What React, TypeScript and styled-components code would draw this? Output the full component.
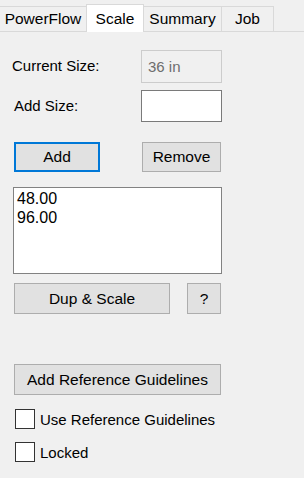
import React from 'react';
import styled, { createGlobalStyle } from 'styled-components';

const GlobalStyle = createGlobalStyle`
  html, body {
    margin: 0;
    padding: 0;
    background: #f0f0f0;
  }
  body {
    font-family: "Liberation Sans", Arial, sans-serif;
    font-size: 15px;
    color: #000;
  }
`;

const Window = styled.div`
  width: 304px;
  height: 478px;
  background: #f0f0f0;
  overflow: hidden;
`;

const TabStrip = styled.div`
  display: flex;
  align-items: flex-end;
  height: 32px;
  box-sizing: border-box;
  border-bottom: 1px solid #d9d9d9;
`;

const Tab = styled.div<{ $w: number; $active?: boolean }>`
  display: flex;
  align-items: center;
  justify-content: center;
  box-sizing: border-box;
  width: ${(p) => p.$w}px;
  height: ${(p) => (p.$active ? 28 : 25)}px;
  margin-bottom: ${(p) => (p.$active ? -1 : 0)}px;
  background: ${(p) => (p.$active ? '#ffffff' : '#f0f0f0')};
  border: 1px solid #d9d9d9;
  border-bottom: none;
  margin-left: -1px;
  font-size: 15.5px;
  &:first-child {
    margin-left: 0;
    border-left: none;
  }
  ${(p) => p.$active && 'position: relative; z-index: 1;'}
`;

const Content = styled.div`
  display: flex;
  flex-direction: column;
  align-items: flex-start;
  padding-top: 18px;
`;

const Row = styled.div<{ $h: number; $mt?: number }>`
  display: flex;
  align-items: center;
  height: ${(p) => p.$h}px;
  margin-top: ${(p) => p.$mt ?? 0}px;
`;

const Label = styled.span<{ $ml: number; $w: number }>`
  margin-left: ${(p) => p.$ml}px;
  width: ${(p) => p.$w}px;
  margin-top: -2px;
`;

const TextBox = styled.div<{ $disabled?: boolean }>`
  box-sizing: border-box;
  width: 81px;
  height: 100%;
  padding-left: 6px;
  display: flex;
  align-items: center;
  background: ${(p) => (p.$disabled ? '#f0f0f0' : '#ffffff')};
  border: 1px solid ${(p) => (p.$disabled ? '#cccccc' : '#7a7a7a')};
  color: #6d6d6d;
`;

const Button = styled.button<{ $w: number; $ml: number; $focused?: boolean }>`
  box-sizing: border-box;
  width: ${(p) => p.$w}px;
  height: 100%;
  margin: 0 0 0 ${(p) => p.$ml}px;
  padding: 0;
  background: #e1e1e1;
  border: ${(p) => (p.$focused ? '2px solid #0078d7' : '1px solid #adadad')};
  border-radius: 0;
  font-family: "Liberation Sans", Arial, sans-serif;
  font-size: 15.5px;
  color: #000;
`;

const ListBox = styled.div`
  box-sizing: border-box;
  width: 209px;
  height: 87px;
  margin: 15px 0 0 13px;
  padding: 1px 0 0 3px;
  background: #ffffff;
  border: 1px solid #828282;
  font-size: 16px;
  line-height: 19px;
`;

const CheckRow = styled.label<{ $mt: number }>`
  display: flex;
  align-items: center;
  gap: 5px;
  height: 20px;
  margin: ${(p) => p.$mt}px 0 0 15px;
`;

const CheckBox = styled.span`
  box-sizing: border-box;
  width: 20px;
  height: 20px;
  background: #ffffff;
  border: 1px solid #333333;
`;

export default function App() {
  return (
    <Window>
      <GlobalStyle />
      <TabStrip>
        <Tab $w={87}>PowerFlow</Tab>
        <Tab $w={58} $active>Scale</Tab>
        <Tab $w={79}>Summary</Tab>
        <Tab $w={53}>Job</Tab>
      </TabStrip>
      <Content>
        <Row $h={33}>
          <Label $ml={12} $w={129}>Current Size:</Label>
          <TextBox $disabled>36 in</TextBox>
        </Row>
        <Row $h={32} $mt={7}>
          <Label $ml={14} $w={127}>Add Size:</Label>
          <TextBox />
        </Row>
        <Row $h={30} $mt={20}>
          <Button $w={86} $ml={14} $focused>Add</Button>
          <Button $w={79} $ml={42}>Remove</Button>
        </Row>
        <ListBox>
          <div>48.00</div>
          <div>96.00</div>
        </ListBox>
        <Row $h={31} $mt={9}>
          <Button $w={156} $ml={14}>Dup &amp; Scale</Button>
          <Button $w={34} $ml={17}>?</Button>
        </Row>
        <Row $h={31} $mt={50}>
          <Button $w={207} $ml={14}>Add Reference Guidelines</Button>
        </Row>
        <CheckRow $mt={14}>
          <CheckBox />
          <span>Use Reference Guidelines</span>
        </CheckRow>
        <CheckRow $mt={13}>
          <CheckBox />
          <span>Locked</span>
        </CheckRow>
      </Content>
    </Window>
  );
}
